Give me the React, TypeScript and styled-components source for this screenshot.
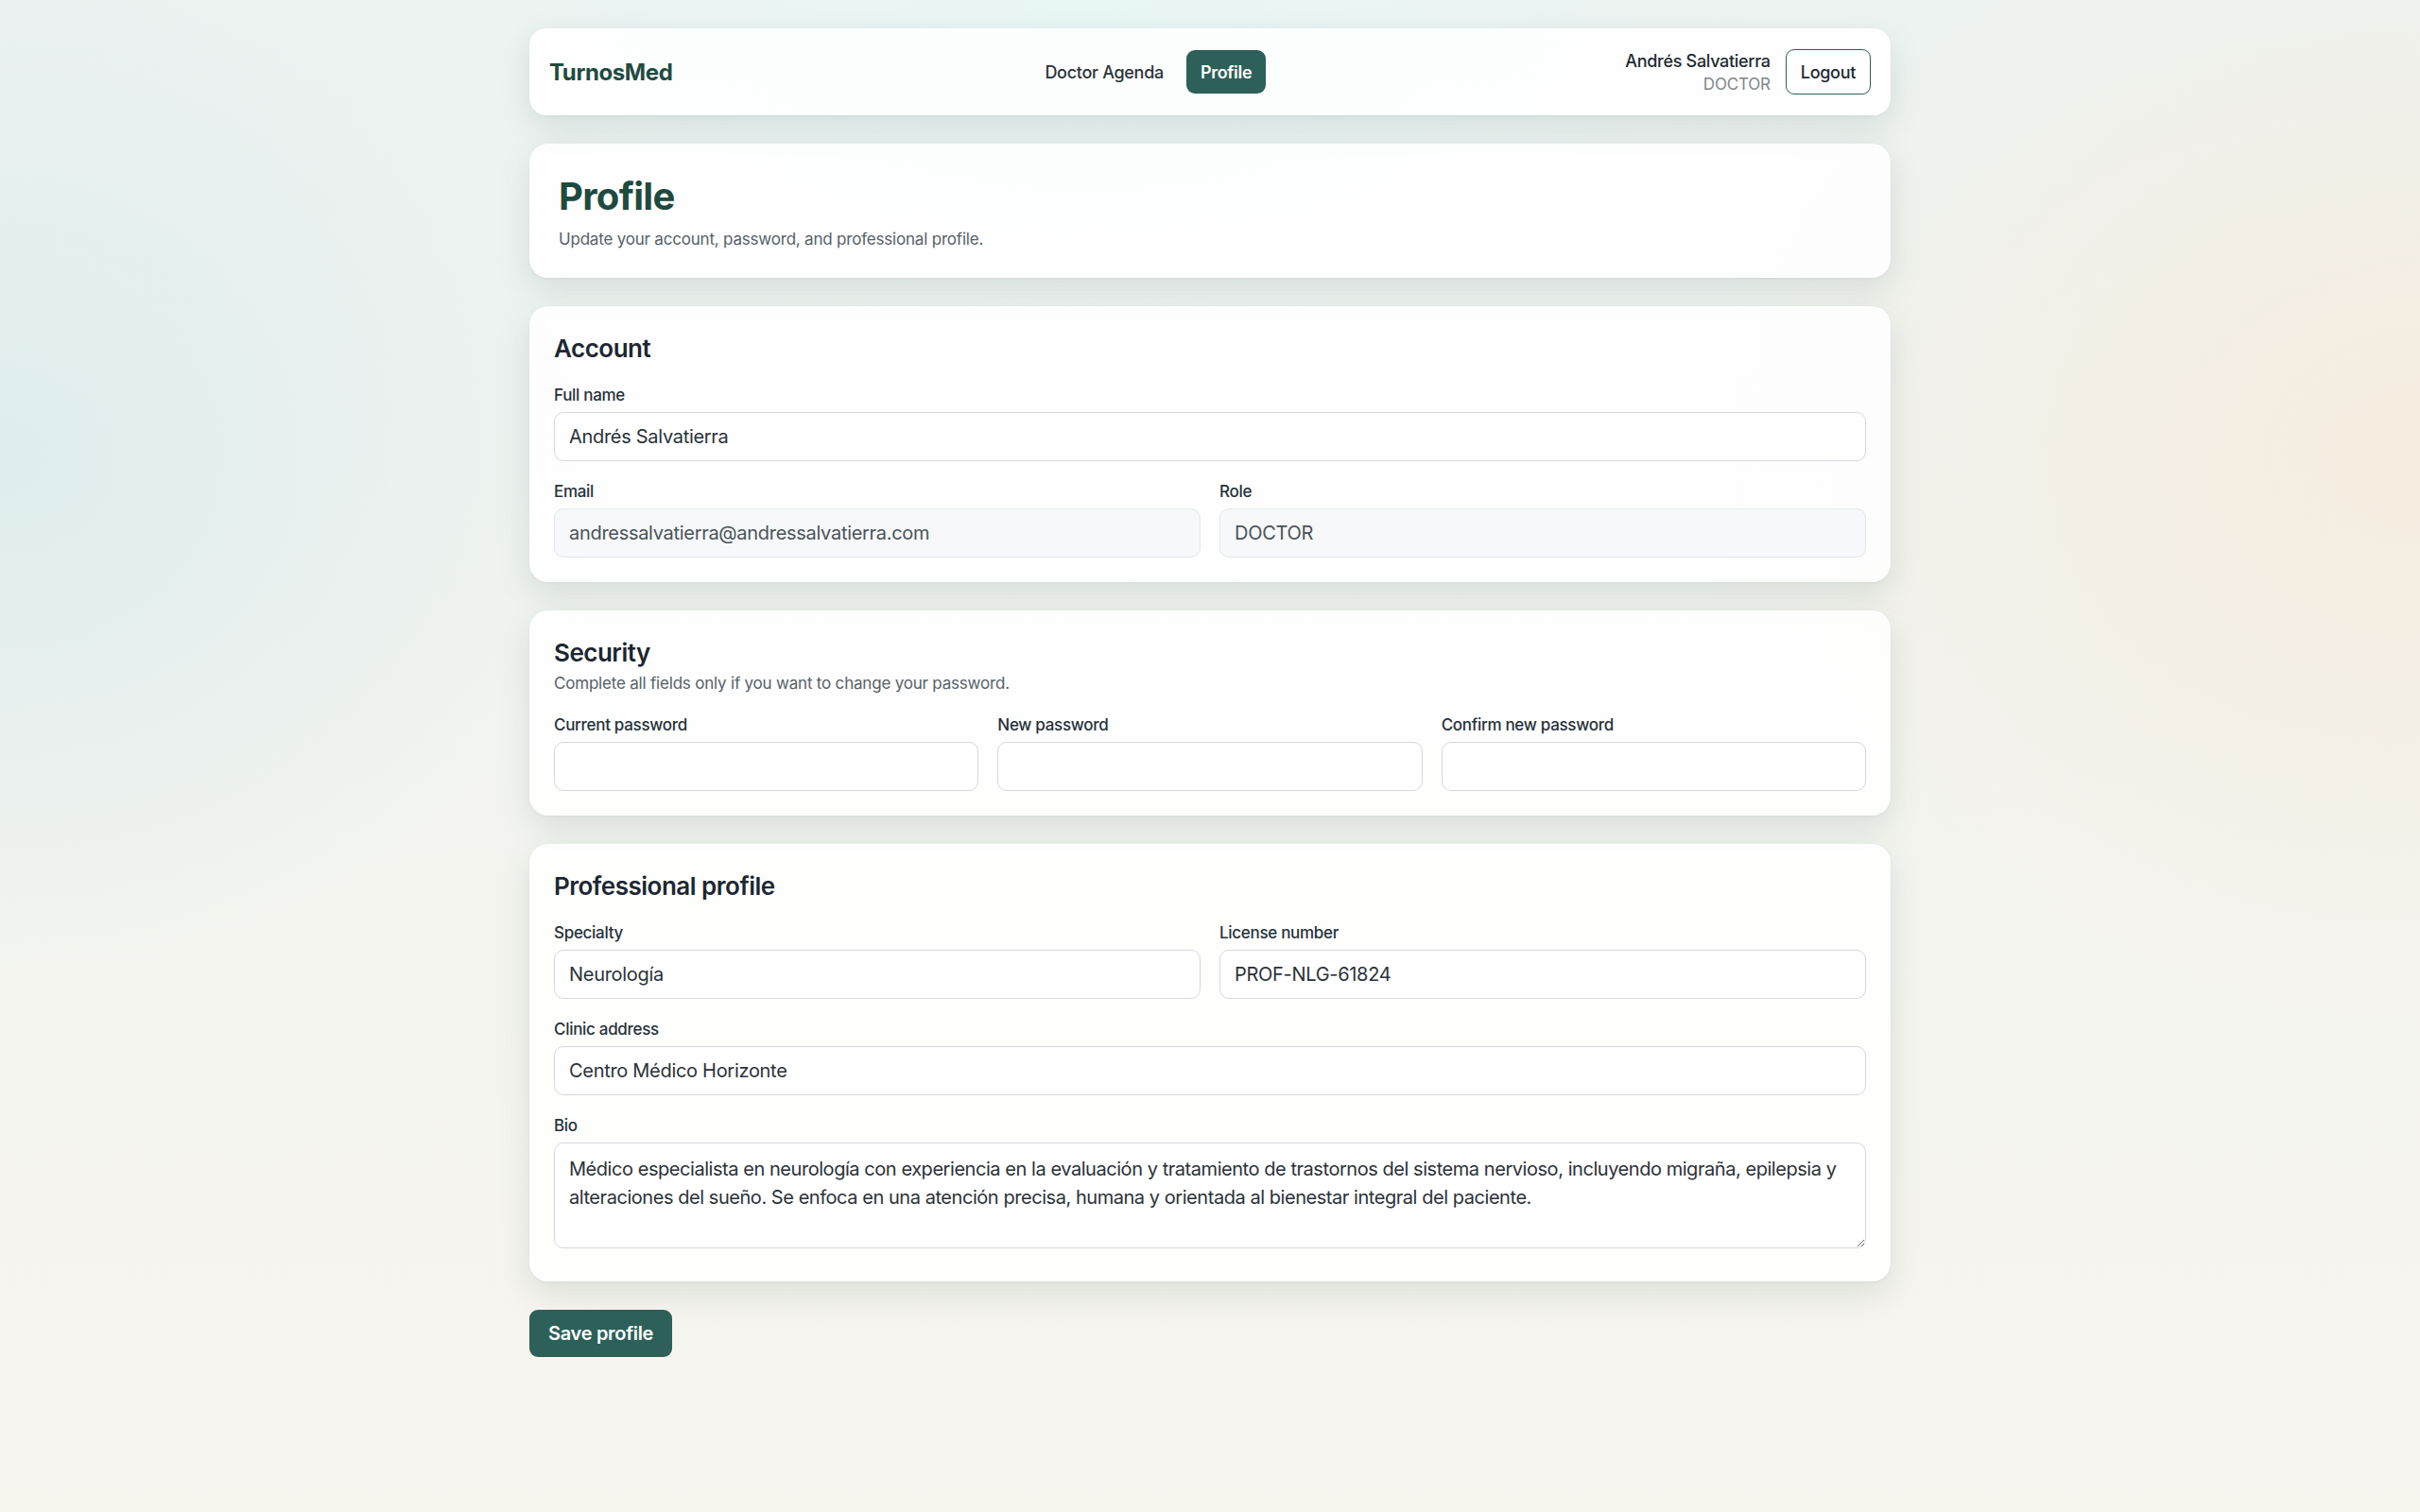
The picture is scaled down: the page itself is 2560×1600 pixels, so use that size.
import styled, { createGlobalStyle } from 'styled-components';

const GlobalStyle = createGlobalStyle`
    * {
        box-sizing: border-box;
    }
    html, body {
        margin: 0;
        min-height: 100%;
    }
    body {
        font-family: Inter, "Noto Sans", "Liberation Sans", sans-serif;
        color: #1e2a32;
        background:
            radial-gradient(ellipse 900px 800px at 0% 30%, rgba(218, 235, 237, 0.8), transparent 72%),
            radial-gradient(ellipse 1000px 500px at 45% 0%, rgba(232, 246, 246, 0.95), transparent 70%),
            radial-gradient(ellipse 1100px 900px at 100% 30%, rgba(246, 236, 222, 0.95), transparent 70%),
            linear-gradient(180deg, #edf3f1 0%, #f3f4ef 55%, #f7f5ee 100%);
        min-height: 100vh;
    }
`;

const Page = styled.main`
    width: 1440px;
    margin: 0 auto;
    padding: 30px 0 80px;
    display: flex;
    flex-direction: column;
    gap: 30px;
`;

const Card = styled.section`
    background: rgba(255, 255, 255, 0.86);
    border-radius: 20px;
    box-shadow: 0 12px 34px rgba(40, 80, 70, 0.13), 0 1px 3px rgba(40, 80, 70, 0.05);
`;

const Header = styled(Card)`
    height: 92px;
    padding: 0 21px;
    display: flex;
    align-items: center;
    justify-content: space-between;
    border-radius: 18px;
`;

const Brand = styled.div`
    font-size: 24px;
    font-weight: 700;
    letter-spacing: -0.4px;
    color: #1f4a40;
`;

const Nav = styled.nav`
    display: flex;
    align-items: center;
    gap: 24px;
    margin-left: 14px;
`;

const NavLink = styled.a<{ $active?: boolean }>`
    font-size: 18px;
    font-weight: ${p => (p.$active ? 600 : 500)};
    color: ${p => (p.$active ? '#ffffff' : '#2b3338')};
    background: ${p => (p.$active ? '#2d6058' : 'transparent')};
    padding: ${p => (p.$active ? '0 15px' : '0')};
    height: 46px;
    display: flex;
    align-items: center;
    border-radius: 9px;
    letter-spacing: -0.3px;
`;

const UserBox = styled.div`
    display: flex;
    align-items: center;
    gap: 16px;
`;

const UserInfo = styled.div`
    display: flex;
    flex-direction: column;
    align-items: flex-end;
    gap: 4px;
`;

const UserName = styled.span`
    font-size: 18px;
    font-weight: 500;
    color: #1e2a32;
    letter-spacing: -0.3px;
`;

const UserRole = styled.span`
    font-size: 17px;
    color: #80878c;
    letter-spacing: -0.2px;
`;

const GhostButton = styled.button`
    height: 48px;
    padding: 0 15px;
    font-family: inherit;
    font-size: 18px;
    font-weight: 500;
    color: #1e2a32;
    background: #ffffff;
    border: 1px solid #2d6058;
    border-radius: 9px;
    letter-spacing: -0.3px;
`;

const TitleCard = styled(Card)`
    padding: 32px 31px 31px;
`;

const Title = styled.h1`
    margin: 0;
    font-size: 40px;
    font-weight: 700;
    color: #1f4a40;
    letter-spacing: -0.7px;
    line-height: 1.2;
`;

const Subtitle = styled.p`
    margin: 11px 0 0;
    font-size: 17px;
    color: #56616a;
    letter-spacing: -0.2px;
`;

const Section = styled(Card)<{ $bottom?: number }>`
    padding: 28px 26px ${p => p.$bottom ?? 26}px;
`;

const SectionTitle = styled.h2`
    margin: 0 0 22px;
    font-size: 26px;
    font-weight: 600;
    color: #1c2731;
    letter-spacing: -0.5px;
    line-height: 34px;
`;

const SectionHint = styled.p`
    margin: -17px 0 23px;
    font-size: 17px;
    line-height: 21px;
    color: #56616a;
    letter-spacing: -0.2px;
`;

const Grid = styled.div<{ $cols: number }>`
    display: grid;
    grid-template-columns: repeat(${p => p.$cols}, 1fr);
    column-gap: 20px;
    row-gap: 22px;
    & + & {
        margin-top: 22px;
    }
`;

const Field = styled.label`
    display: flex;
    flex-direction: column;
    gap: 8px;
`;

const Label = styled.span`
    font-size: 17px;
    font-weight: 500;
    color: #26313a;
    letter-spacing: -0.3px;
    line-height: 20px;
`;

const Input = styled.input`
    height: 52px;
    width: 100%;
    padding: 0 15px;
    font-family: inherit;
    font-size: 20px;
    color: #2a3238;
    background: #ffffff;
    border: 1px solid #d4d8dc;
    border-radius: 10px;
    letter-spacing: -0.3px;
    outline: none;
    &:read-only {
        background: #f6f8f9;
        border-color: #e4e8ea;
        color: #4a535a;
    }
`;

const TextArea = styled.textarea`
    display: block;
    width: 100%;
    height: 112px;
    padding: 12px 15px;
    font-family: inherit;
    font-size: 20px;
    line-height: 30px;
    color: #2a3238;
    background: #ffffff;
    border: 1px solid #d4d8dc;
    border-radius: 10px;
    letter-spacing: -0.45px;
    resize: vertical;
    outline: none;
`;

const PrimaryButton = styled.button`
    align-self: flex-start;
    height: 50px;
    padding: 0 20px;
    font-family: inherit;
    font-size: 20px;
    font-weight: 600;
    color: #ffffff;
    background: #2d6058;
    border: none;
    border-radius: 9px;
    letter-spacing: -0.3px;
`;

const bio =
    'Médico especialista en neurología con experiencia en la evaluación y tratamiento de trastornos del sistema nervioso, incluyendo migraña, epilepsia y alteraciones del sueño. Se enfoca en una atención precisa, humana y orientada al bienestar integral del paciente.';

export default function App() {
    return (
        <>
            <GlobalStyle />
            <Page>
                <Header as="header">
                    <Brand>TurnosMed</Brand>
                    <Nav>
                        <NavLink>Doctor Agenda</NavLink>
                        <NavLink $active>Profile</NavLink>
                    </Nav>
                    <UserBox>
                        <UserInfo>
                            <UserName>Andrés Salvatierra</UserName>
                            <UserRole>DOCTOR</UserRole>
                        </UserInfo>
                        <GhostButton>Logout</GhostButton>
                    </UserBox>
                </Header>

                <TitleCard>
                    <Title>Profile</Title>
                    <Subtitle>Update your account, password, and professional profile.</Subtitle>
                </TitleCard>

                <Section>
                    <SectionTitle>Account</SectionTitle>
                    <Grid $cols={1}>
                        <Field>
                            <Label>Full name</Label>
                            <Input defaultValue="Andrés Salvatierra" />
                        </Field>
                    </Grid>
                    <Grid $cols={2}>
                        <Field>
                            <Label>Email</Label>
                            <Input readOnly defaultValue="andressalvatierra@andressalvatierra.com" />
                        </Field>
                        <Field>
                            <Label>Role</Label>
                            <Input readOnly defaultValue="DOCTOR" />
                        </Field>
                    </Grid>
                </Section>

                <Section>
                    <SectionTitle>Security</SectionTitle>
                    <SectionHint>Complete all fields only if you want to change your password.</SectionHint>
                    <Grid $cols={3}>
                        <Field>
                            <Label>Current password</Label>
                            <Input type="password" />
                        </Field>
                        <Field>
                            <Label>New password</Label>
                            <Input type="password" />
                        </Field>
                        <Field>
                            <Label>Confirm new password</Label>
                            <Input type="password" />
                        </Field>
                    </Grid>
                </Section>

                <Section $bottom={35}>
                    <SectionTitle>Professional profile</SectionTitle>
                    <Grid $cols={2}>
                        <Field>
                            <Label>Specialty</Label>
                            <Input defaultValue="Neurología" />
                        </Field>
                        <Field>
                            <Label>License number</Label>
                            <Input defaultValue="PROF-NLG-61824" />
                        </Field>
                    </Grid>
                    <Grid $cols={1}>
                        <Field>
                            <Label>Clinic address</Label>
                            <Input defaultValue="Centro Médico Horizonte" />
                        </Field>
                        <Field>
                            <Label>Bio</Label>
                            <TextArea defaultValue={bio} />
                        </Field>
                    </Grid>
                </Section>

                <PrimaryButton>Save profile</PrimaryButton>
            </Page>
        </>
    );
}
